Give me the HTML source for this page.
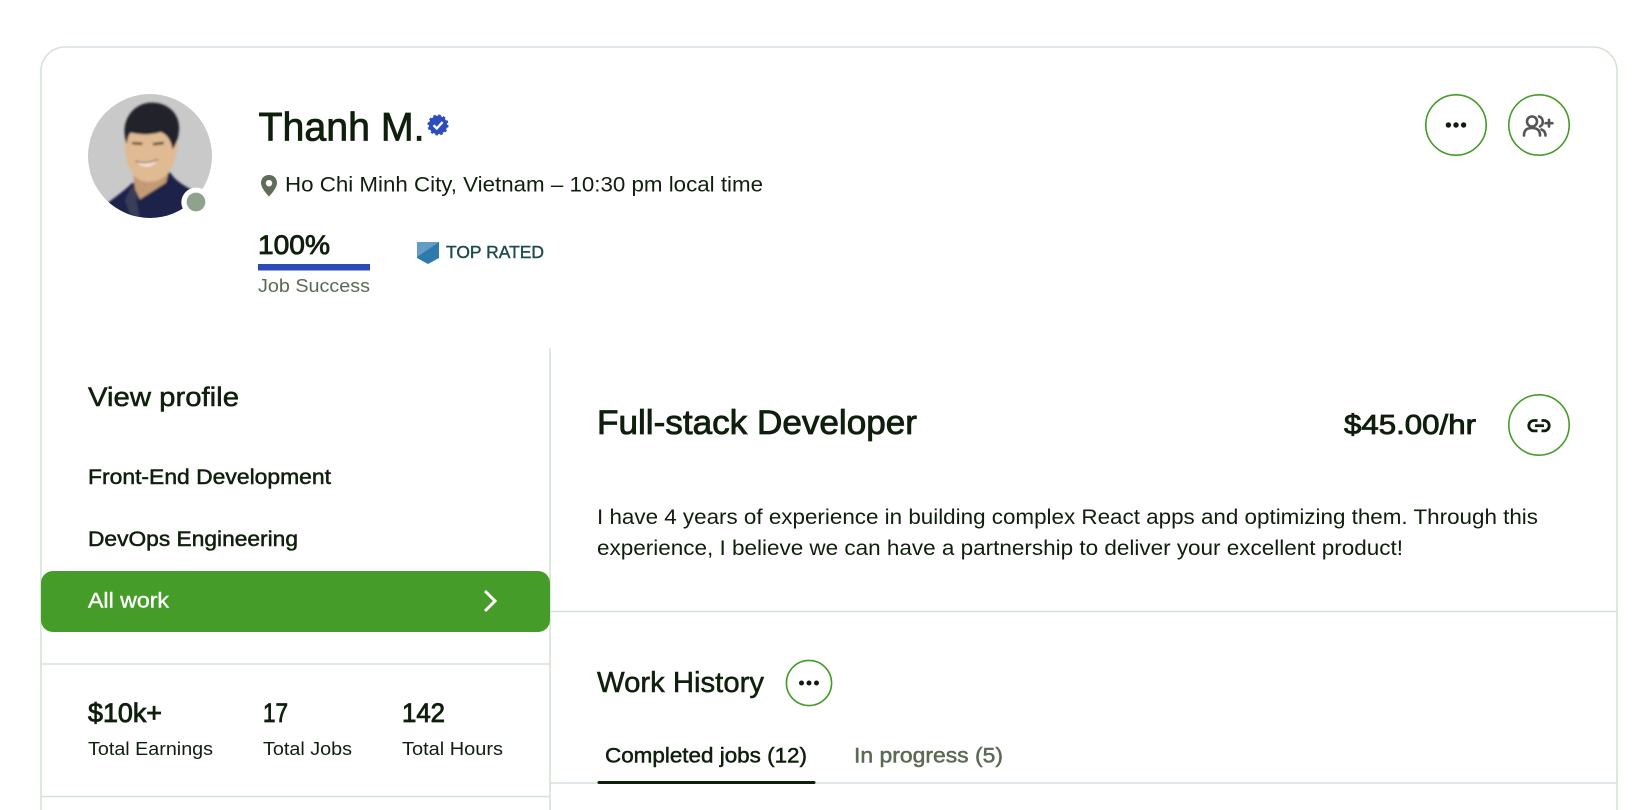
<!DOCTYPE html>
<html lang="en">
<head>
<meta charset="utf-8">
<title>Thanh M. profile</title>
<style>
html,body{margin:0;padding:0;background:#fff;width:1650px;height:810px;overflow:hidden}
svg{display:block}
text{font-family:"Liberation Sans",Arial,sans-serif;fill:#0e1f0b;white-space:pre;filter:blur(.25px)}
.m{stroke:#0e1f0b;stroke-width:.5px}
.b{stroke:#0e1f0b;stroke-width:.85px}
.line{stroke:#d5e2d5;stroke-width:1.6;fill:none}
.btn{fill:#fff;stroke:#459c29;stroke-width:1.6}
</style>
</head>
<body>
<svg width="1650" height="810" viewBox="0 0 1650 810" xmlns="http://www.w3.org/2000/svg">
<defs>
<clipPath id="av"><circle cx="210" cy="210" r="186"/></clipPath>
<filter id="soft" x="-5%" y="-5%" width="110%" height="110%"><feGaussianBlur stdDeviation="3"/></filter>
</defs>

<!-- card -->
<path class="line" d="M41,815 V71 A24,24 0 0 1 65,47 H1593 A24,24 0 0 1 1617,71 V815"/>
<line class="line" x1="550" y1="348" x2="550" y2="815"/>
<line class="line" x1="550" y1="611.5" x2="1617" y2="611.5"/>
<line class="line" x1="550" y1="783" x2="1617" y2="783"/>
<line class="line" x1="41" y1="664" x2="550" y2="664"/>
<line class="line" x1="41" y1="796.5" x2="550" y2="796.5"/>

<!-- avatar -->
<g transform="translate(80 86) scale(.3333)">
<g clip-path="url(#av)">
<rect x="20" y="20" width="380" height="380" fill="#c9c9c9"/>
<g filter="url(#soft)">
<path d="M80,352 C105,335 135,312 155,292 L270,258 C285,285 315,300 350,320 L350,420 L70,420Z" fill="#1b2248"/>
<path d="M160,270 L268,250 L258,290 L180,340 L165,310Z" fill="#c39a74"/>
<path d="M135,342 L156,298 L172,330 L170,345 L180,400 L150,385Z" fill="#383c58"/>
<path d="M135,165 C132,205 142,250 170,276 C195,296 240,290 262,264 C282,240 294,200 292,160 L270,110 L150,110Z" fill="#dfba93"/>
<path d="M134,146 C128,95 165,50 215,50 C270,50 302,90 297,135 C295,160 286,178 278,190 C274,168 264,146 242,138 C212,148 176,146 152,140 C145,148 143,158 141,172 C135,165 136,155 134,146Z" fill="#20212a"/>
<path d="M155,168 L188,170 L186,177 L157,175Z" fill="#5a4536"/>
<path d="M218,171 L252,167 L250,175 L220,178Z" fill="#5a4536"/>
<path d="M170,226 C188,234 212,232 230,222 C226,246 182,250 170,226Z" fill="#f1e3d4"/>
<path d="M166,225 C186,233 214,231 234,220" stroke="#7a4a33" stroke-width="3" fill="none"/>
</g>
</g>
<circle cx="348" cy="349" r="44" fill="#fff"/>
<circle cx="348" cy="348" r="28" fill="#8fa28d"/>
</g>

<!-- name -->
<text x="258.5" y="140.5" font-size="40" textLength="166" lengthAdjust="spacingAndGlyphs" style="stroke:#0e1f0b;stroke-width:.8px">Thanh M.</text>
<circle cx="438" cy="125" r="8.8" fill="#2b4dbd" stroke="#2b4dbd" stroke-width="3.4" stroke-dasharray="2.4 2.2"/>
<circle cx="438" cy="125" r="9.2" fill="#2b4dbd"/>
<path d="M433.5,125.2 L436.8,128.4 L442.6,122" fill="none" stroke="#fff" stroke-width="2.4"/>

<!-- location -->
<path fill-rule="evenodd" fill="#5f6d56" d="M269,175 C263.8,175 261,178.8 261,183 C261,188.5 269,196.5 269,196.5 C269,196.5 277,188.5 277,183 C277,178.8 274.2,175 269,175Z M269,180 a3.2,3.2 0 1 0 .01,0Z"/>
<text x="285" y="191.5" font-size="21.5" textLength="478" lengthAdjust="spacingAndGlyphs">Ho Chi Minh City, Vietnam – 10:30 pm local time</text>

<!-- job success -->
<text x="258" y="254" font-size="27" textLength="72" lengthAdjust="spacingAndGlyphs" class="b">100%</text>
<rect x="258" y="264" width="112" height="6.5" fill="#2b4bb6"/>
<text x="258" y="292" font-size="18.3" textLength="112" lengthAdjust="spacingAndGlyphs" style="fill:#5a6a52">Job Success</text>

<!-- top rated -->
<path d="M417,242 H439 V258 L428,264 L417,258Z" fill="#2f7aad"/>
<path d="M417,242 H439 L417,257Z" fill="#639cc4"/>
<text x="446" y="258" font-size="17.3" textLength="98" lengthAdjust="spacingAndGlyphs" style="fill:#1c4a4a;stroke:#1c4a4a;stroke-width:.4px">TOP RATED</text>

<!-- top buttons -->
<circle class="btn" cx="1456" cy="125" r="30.2"/>
<circle cx="1448.4" cy="125" r="2.7" fill="#0e1f0b"/><circle cx="1456" cy="125" r="2.7" fill="#0e1f0b"/><circle cx="1463.6" cy="125" r="2.7" fill="#0e1f0b"/>
<circle class="btn" cx="1539" cy="125" r="30.2"/>
<g fill="none" stroke="#555" stroke-width="2.6" stroke-linecap="round">
<circle cx="1532" cy="121.5" r="5"/>
<path d="M1524,135.5 C1524,130 1527,128 1532,128 C1537,128 1540,130 1540,135.5"/>
<path d="M1539,116.5 C1543,117.5 1544.5,124 1540,126.5"/>
<path d="M1541.5,129.5 C1544,130.5 1545.5,132.5 1545.5,135.5"/>
<path d="M1549,119.8 V126.6 M1545.6,123.2 H1552.4"/>
</g>

<!-- sidebar -->
<text x="88" y="406" font-size="27" textLength="151" lengthAdjust="spacingAndGlyphs" class="m">View profile</text>
<text x="88" y="484" font-size="21.5" textLength="243" lengthAdjust="spacingAndGlyphs" class="m">Front-End Development</text>
<text x="88" y="546" font-size="21.5" textLength="210" lengthAdjust="spacingAndGlyphs" class="m">DevOps Engineering</text>
<path d="M41,583 A12,12 0 0 1 53,571 H538 A12,12 0 0 1 550,583 V620 A12,12 0 0 1 538,632 H53 A12,12 0 0 1 41,620Z" fill="#459c29"/>
<text x="88" y="607.5" font-size="21.5" textLength="81" lengthAdjust="spacingAndGlyphs" style="fill:#fff;stroke:#fff;stroke-width:.4px">All work</text>
<path d="M485,591 L495,601 L485,611" fill="none" stroke="#fff" stroke-width="3"/>

<!-- stats -->
<text x="88" y="722" font-size="26.5" textLength="74" lengthAdjust="spacingAndGlyphs" class="b">$10k+</text>
<text x="263" y="722" font-size="26.5" textLength="25" lengthAdjust="spacingAndGlyphs" class="b">17</text>
<text x="402" y="722" font-size="26.5" textLength="43" lengthAdjust="spacingAndGlyphs" class="b">142</text>
<text x="88" y="755" font-size="18.8" textLength="125" lengthAdjust="spacingAndGlyphs">Total Earnings</text>
<text x="263" y="755" font-size="18.8" textLength="89" lengthAdjust="spacingAndGlyphs">Total Jobs</text>
<text x="402" y="755" font-size="18.8" textLength="101" lengthAdjust="spacingAndGlyphs">Total Hours</text>

<!-- main -->
<text x="597" y="434" font-size="34" textLength="320" lengthAdjust="spacingAndGlyphs" class="b">Full-stack Developer</text>
<text x="1344" y="434" font-size="27.5" textLength="132" lengthAdjust="spacingAndGlyphs" class="b">$45.00/hr</text>
<circle class="btn" cx="1539" cy="425" r="30.2"/>
<g fill="none" stroke="#0e1f0b" stroke-width="2.8">
<path d="M1537.5,420.5 H1534 a5.2,5.2 0 0 0 0,10.4 H1537.5"/>
<path d="M1541.5,420.5 H1544 a5.2,5.2 0 0 1 0,10.4 H1541.5"/>
<path d="M1535,425.7 H1544"/>
</g>
<text x="597" y="524" font-size="21.2" textLength="941" lengthAdjust="spacingAndGlyphs">I have 4 years of experience in building complex React apps and optimizing them. Through this</text>
<text x="597" y="555" font-size="21.2" textLength="806" lengthAdjust="spacingAndGlyphs">experience, I believe we can have a partnership to deliver your excellent product!</text>

<!-- work history -->
<text x="597" y="692" font-size="28.5" textLength="167" lengthAdjust="spacingAndGlyphs" class="m">Work History</text>
<circle class="btn" cx="809" cy="683" r="22.6"/>
<circle cx="801.5" cy="683" r="2.5" fill="#0e1f0b"/><circle cx="809" cy="683" r="2.5" fill="#0e1f0b"/><circle cx="816.5" cy="683" r="2.5" fill="#0e1f0b"/>
<text x="605" y="762.5" font-size="21.5" textLength="202" lengthAdjust="spacingAndGlyphs" class="m">Completed jobs (12)</text>
<text x="854" y="762.5" font-size="21.5" textLength="149" lengthAdjust="spacingAndGlyphs" style="fill:#5a6a52;stroke:#5a6a52;stroke-width:.5px">In progress (5)</text>
<rect x="597.5" y="781" width="218" height="3" rx="1.5" fill="#0e1f0b"/>
</svg>
</body>
</html>
